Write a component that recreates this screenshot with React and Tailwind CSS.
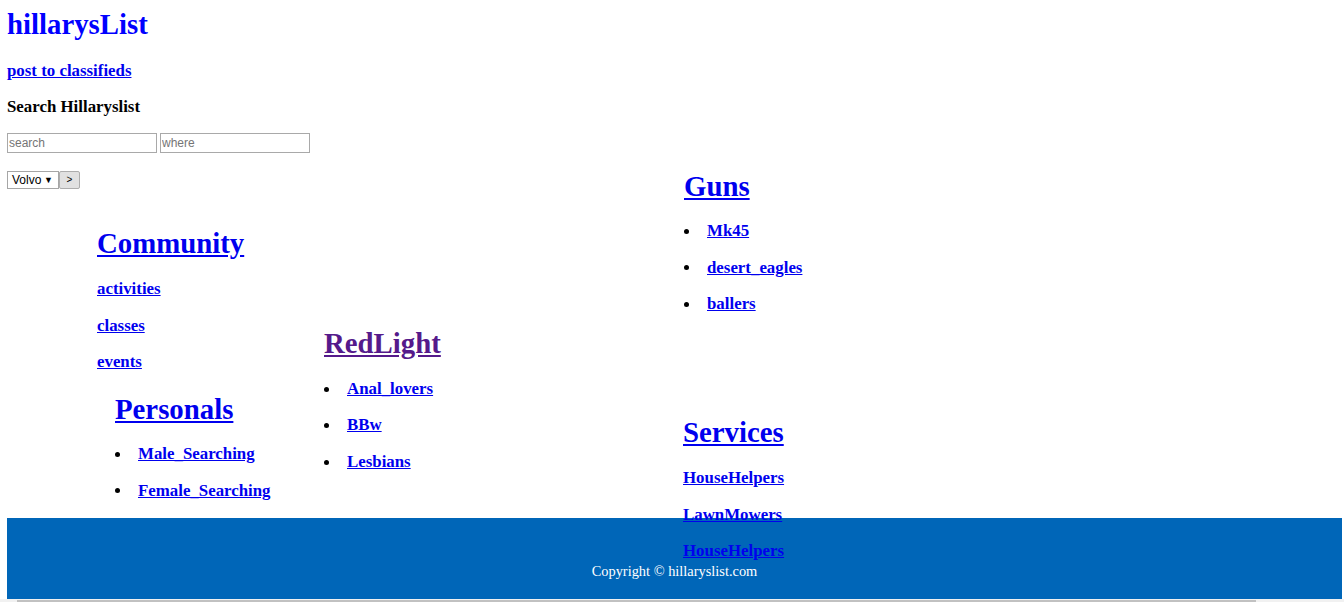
import React from 'react';
import clsx from 'clsx';

const LINK = 'underline text-[#0000ee]';

/* ── big section title (h1 at 90% zoom) ───────── */
function Title({ children, visited, className }) {
  return (
    <h1 className={clsx('text-[28.8px] leading-[33px] font-bold whitespace-nowrap', className)}>
      <a href="#" className={clsx('underline', visited ? 'text-[#551a8b]' : 'text-[#0000ee]')}>
        {children}
      </a>
    </h1>
  );
}

function Links({ items, bullets, className }) {
  return (
    <div className={clsx('text-[16.85px] leading-[36.6px] font-bold whitespace-nowrap', className)}>
      {items.map((t, i) => (
        <div key={i} className="flex items-center">
          {bullets && <span className="w-[5px] h-[5px] rounded-full bg-black mr-[18px]" />}
          <a href="#" className={LINK}>{t}</a>
        </div>
      ))}
    </div>
  );
}

export default function App() {
  return (
    <div className="w-[1344px] h-[602px] overflow-hidden bg-white text-black font-['Liberation_Serif',serif]">
      {/* Header */}
      <div className="pl-[7px] pt-[8px]">
        <h1 className="text-[28.8px] leading-[33px] font-bold text-[#0000ff]">hillarysList</h1>
        <h3 className="mt-[19.6px] text-[16.85px] leading-[19.4px] font-bold">
          <a href="#" className={LINK}>post to classifieds</a>
        </h3>
        <h3 className="mt-[17.3px] text-[16.85px] leading-[19.4px] font-bold">Search Hillaryslist</h3>
        <div className="mt-[16.6px] flex gap-[3px] font-['Liberation_Sans',sans-serif]">
          <input
            placeholder="search"
            className="w-[150px] h-[20px] border border-[#a9a9a9] px-[1px] text-[12px] outline-none placeholder:text-[#757575]"
          />
          <input
            placeholder="where"
            className="w-[150px] h-[20px] border border-[#a9a9a9] px-[1px] text-[12px] outline-none placeholder:text-[#757575]"
          />
        </div>
      </div>

      {/* Categories */}
      <div className="mt-[15.5px] h-[349.2px] flex">
        <div className="w-[324px] shrink-0 pl-[7px]">
          <div className="mt-[1.9px] flex items-center font-['Liberation_Sans',sans-serif]">
            <div className="w-[52px] h-[17.3px] border border-[#a6a6a6] bg-white flex items-center justify-between pl-[4px] pr-[5px] text-[12px] leading-none">
              <span>Volvo</span>
              <span className="text-[9px]">▼</span>
            </div>
            <button
              type="button"
              className="w-[21px] h-[18.7px] border border-[#adadad] bg-[#e1e1e1] rounded-[2px] text-[10px] leading-none"
            >
              &gt;
            </button>
          </div>
          <Title className="mt-[37.7px] ml-[90px]">Community</Title>
          <Links className="mt-[10.9px] ml-[90px]" items={['activities', 'classes', 'events']} />
          <Title className="mt-[12.6px] ml-[108px]">Personals</Title>
          <Links bullets className="mt-[9.6px] ml-[108px]" items={['Male_Searching', 'Female_Searching']} />
        </div>

        <div className="w-[360px] shrink-0 pt-[158px]">
          <Title visited>RedLight</Title>
          <Links bullets className="mt-[11px]" items={['Anal_lovers', 'BBw', 'Lesbians']} />
        </div>

        <div className="pt-[0.8px]">
          <Title>Guns</Title>
          <Links bullets className="mt-[10.4px]" items={['Mk45', 'desert_eagles', 'ballers']} />
          <Title className="mt-[93.6px] -ml-px">Services</Title>
          <Links className="mt-[10.8px] -ml-px" items={['HouseHelpers', 'LawnMowers', 'HouseHelpers']} />
        </div>
      </div>

      {/* Footer */}
      <div className="ml-[7px] w-[1335px] h-[80.7px] pt-[45.3px] bg-[#0066b8] text-center text-white text-[14.4px] leading-[16.6px]">
        Copyright © hillaryslist.com
      </div>

      {/* page scrollbar strip */}
      <div className="h-[4px] bg-[#f1f1f1] pt-[1.5px]">
        <div className="ml-[17px] w-[1239px] h-[2.5px] bg-[#c1c1c1]" />
      </div>
    </div>
  );
}
